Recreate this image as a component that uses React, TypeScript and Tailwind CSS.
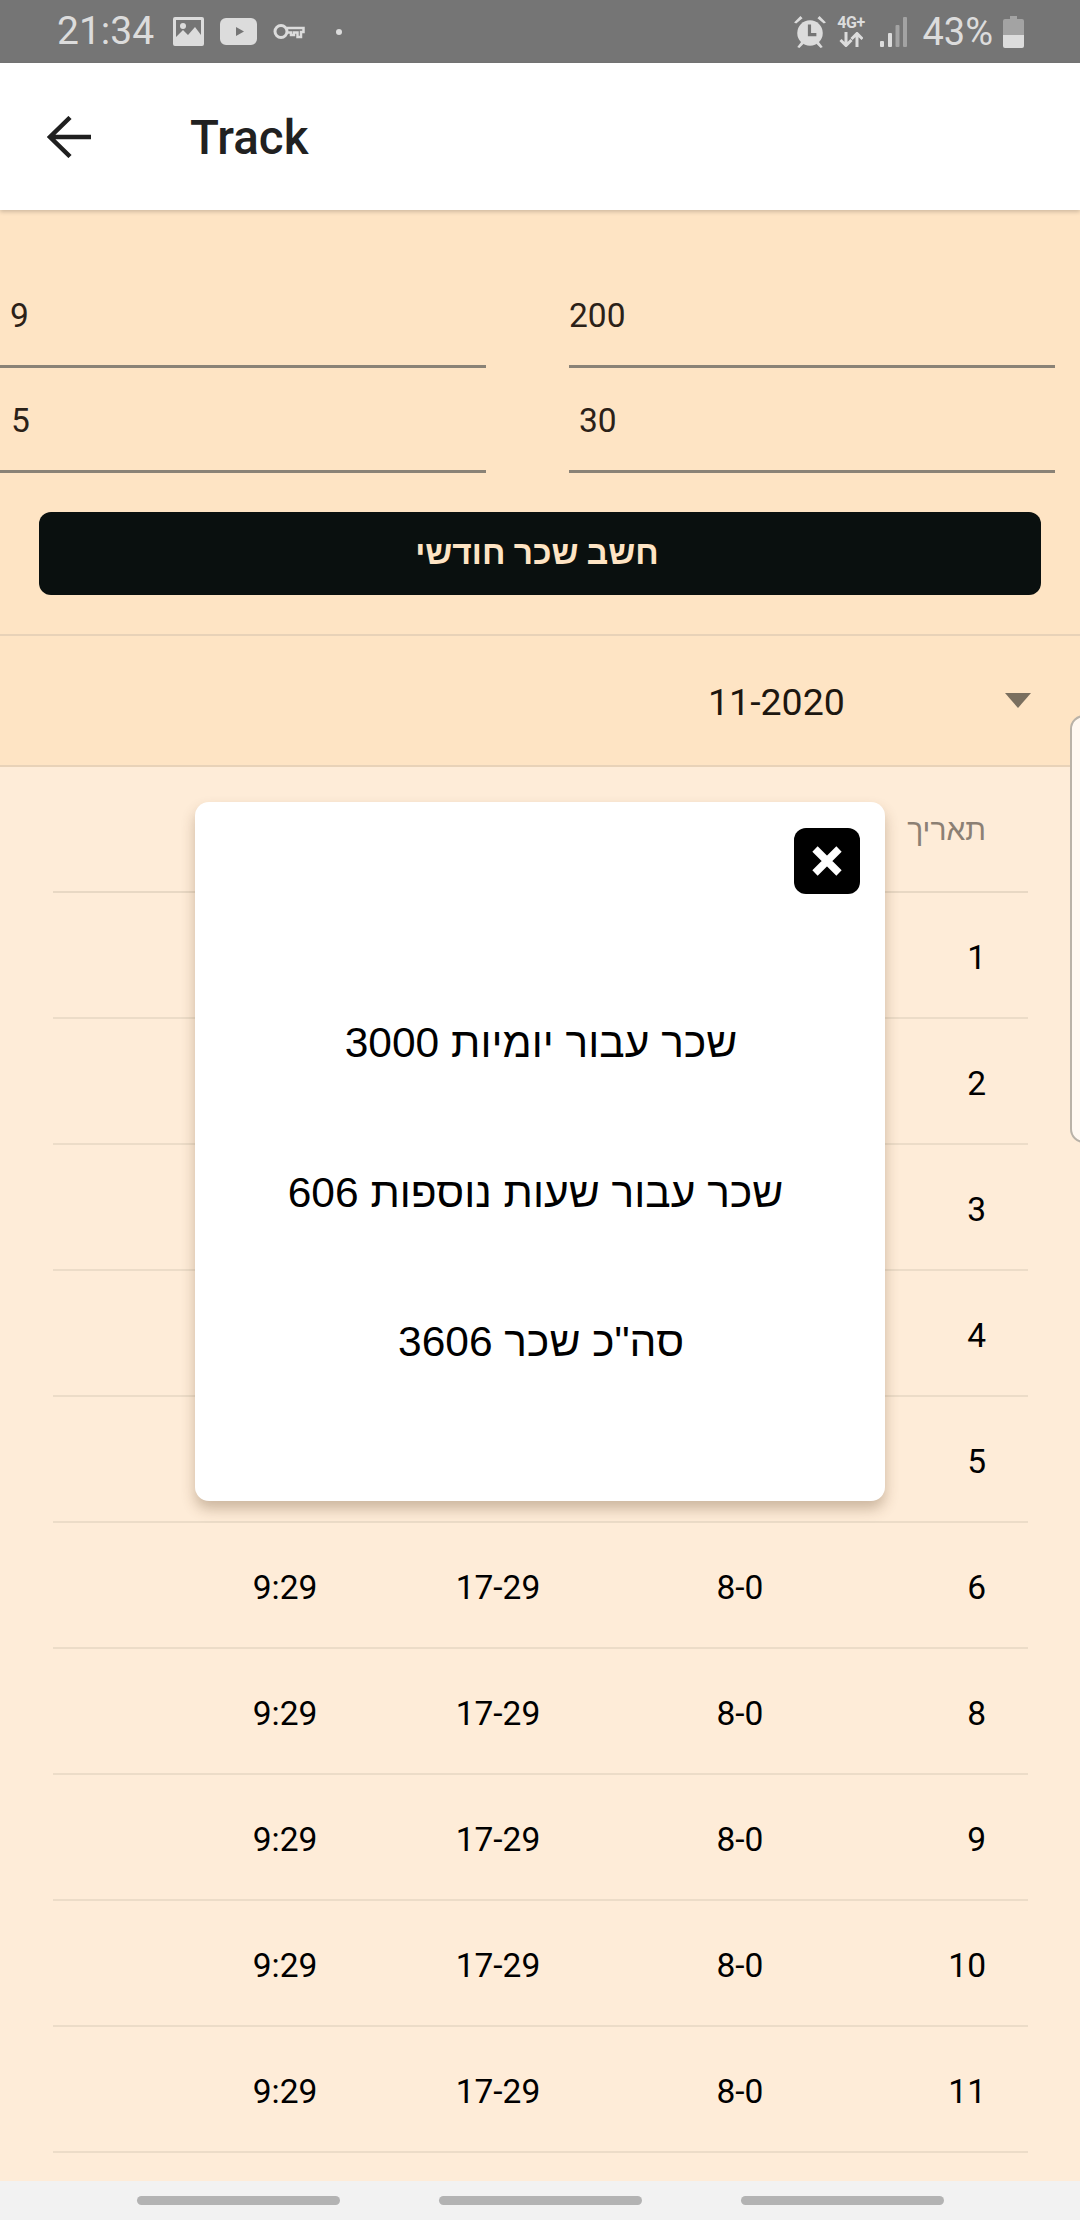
const rows = ["1", "2", "3", "4", "5", "6", "8", "9", "10", "11"];

// the dialog sits over the first five rows, only their date shows
const coveredRows = ["1", "2", "3", "4", "5"];

function StatusBar() {
  return (
    <div className="flex h-[63px] items-center justify-between bg-[#757575] pl-[57px] pr-[56px] text-[#dcdcdc]">
      <div className="flex items-center">
        <span className="text-[39px] leading-none">21:34</span>
        {/* picture */}
        <svg className="ml-[19px]" width="31" height="29" viewBox="0 0 31 29" fill="currentColor">
          <path fillRule="evenodd" d="M2 0h27a2 2 0 0 1 2 2v25a2 2 0 0 1-2 2H2a2 2 0 0 1-2-2V2a2 2 0 0 1 2-2zm1 3v17l7-7 5 5 7-8 6 8V3H3z" />
          <circle cx="10" cy="9" r="3" />
        </svg>
        {/* video */}
        <svg className="ml-4" width="37" height="27" viewBox="0 0 37 27" fill="currentColor">
          <path fillRule="evenodd" d="M6 0h25a6 6 0 0 1 6 6v15a6 6 0 0 1-6 6H6a6 6 0 0 1-6-6V6a6 6 0 0 1 6-6zm10 9v9l8-4.500z" />
        </svg>
        {/* key */}
        <svg className="ml-4" width="32" height="17" viewBox="0 0 32 17" fill="none" stroke="currentColor" strokeWidth="3">
          <circle cx="8" cy="8.500" r="6" />
          <path d="M14 5h16.500v4H28v5h-3.500V9.500H21V12h-3V9.500h-4" strokeWidth="2.500" />
        </svg>
        <span className="ml-[31px] h-[6px] w-[6px] rounded-full bg-[#dcdcdc]" />
      </div>
      <div className="flex items-center">
        {/* alarm */}
        <svg width="34" height="34" viewBox="0 0 32 32" fill="currentColor">
          <circle cx="16" cy="17" r="12" />
          <path d="M1 7l6-6 2 2-6 5zM31 7l-6-6-2 2 6 5zM4 30l4-5 2 2-4 4zM28 30l-4-5-2 2 4 4z" />
          <path d="M14 9h3v8h5v3h-8z" fill="#757575" />
        </svg>
        <div className="ml-[8px] flex w-[31px] flex-col items-center">
          <span className="text-[16px] font-bold leading-[13px] tracking-[-0.5px]">4G+</span>
          <svg className="mt-[3px]" width="24" height="15" viewBox="0 0 24 15" fill="none" stroke="currentColor" strokeWidth="3">
            <path d="M7 0v13M1.500 8l5.500 5.500L12.500 8" />
            <path d="M18 15V2M12.500 7L18 1.500 23.500 7" />
          </svg>
        </div>
        {/* signal */}
        <svg className="ml-[14px]" width="27" height="30" viewBox="0 0 27 30" fill="currentColor">
          <rect x="0" y="24" width="4" height="6" rx="1" />
          <rect x="8" y="16" width="4" height="14" rx="1" />
          <rect x="15.500" y="8" width="4" height="22" rx="1" opacity="0.45" />
          <rect x="23" y="0" width="4" height="30" rx="1" opacity="0.45" />
        </svg>
        <span className="ml-[15px] text-[38px] leading-none">43%</span>
        <svg className="ml-[10px]" width="21" height="32" viewBox="0 0 21 32" fill="currentColor">
          <path d="M7 0h7v3h5a2 2 0 0 1 2 2v14H0V5a2 2 0 0 1 2-2h5z" opacity="0.45" />
          <path d="M0 19h21v11a2 2 0 0 1-2 2H2a2 2 0 0 1-2-2z" />
        </svg>
      </div>
    </div>
  );
}

function Field({ value, indent }: { value: string; indent: string }) {
  return (
    <div className={`flex h-[105px] w-[486px] items-center border-b-[3px] border-[#8a8276] pt-[4px] text-[33.500px] text-[#2b2118] ${indent}`}>
      {value}
    </div>
  );
}

export default function App() {
  return (
    <div className="relative h-[2220px] w-[1080px] overflow-hidden bg-[#feecd8] font-['Roboto','Liberation_Sans',sans-serif]">
      <StatusBar />

      {/* toolbar */}
      <div className="relative z-10 flex h-[147px] items-center bg-white shadow-[0_2px_4px_rgba(0,0,0,0.18)]">
        <svg className="ml-[47px]" width="44" height="42" viewBox="0 0 44 42" fill="none" stroke="#1f1f1f" strokeWidth="4.500">
          <path d="M44 21H3M23 1.500L3 21l20 19.500" />
        </svg>
        <span className="ml-[99px] pt-[5px] text-[47.500px] font-medium text-[#212121]">Track</span>
      </div>

      {/* inputs */}
      <div className="bg-[#fee4c4]">
        <div className="flex flex-col pt-[53px]">
          <div className="flex justify-between pr-[25px]">
            <Field value="9" indent="pl-[10px]" />
            <Field value="200" indent="" />
          </div>
          <div className="flex justify-between pr-[25px]">
            <Field value="5" indent="pl-[11px]" />
            <Field value="30" indent="pl-[10px]" />
          </div>
        </div>
        <div className="p-[39px]">
          <button className="flex h-[83px] w-[1002px] items-center justify-center rounded-[12px] bg-[#0a100f] pr-[6px] text-[33.500px] font-bold text-[#fee4c4]" dir="rtl">
            חשב שכר חודשי
          </button>
        </div>
        <div className="flex h-[133px] items-center border-y-2 border-[#e8d2b8]">
          <span className="ml-[708px] pt-[4px] text-[37.500px] text-[#1d1710]">11-2020</span>
          <span className="ml-[160px] h-0 w-0 border-x-[13px] border-t-[15px] border-x-transparent border-t-[#7a6f5f]" />
        </div>
      </div>

      {/* table */}
      <div className="ml-[53px] mr-[52px]">
        <div className="flex h-[126px] items-center justify-end border-b-2 border-[#e8d8c4] pr-[42px] text-[30px] text-[#8c8074]">
          <span dir="rtl">תאריך</span>
        </div>
        {rows.map((n) => (
          <div key={n} className="flex h-[126px] items-center border-b-2 border-[#ecdcc8] pt-[6px] text-[33.500px] text-black">
            {!coveredRows.includes(n) && (
              <>
                <span className="ml-[172px] w-[120px] text-center">9:29</span>
                <span className="ml-[93px] w-[120px] text-center">17-29</span>
                <span className="ml-[122px] w-[120px] text-center">8-0</span>
              </>
            )}
            <span className="ml-auto mr-[42px]">{n}</span>
          </div>
        ))}
      </div>

      {/* nav bar */}
      <div className="absolute bottom-0 left-0 flex h-[39px] w-full items-start justify-center gap-[99px] bg-[#f2f2f2] pt-[15px]">
        <span className="h-[9px] w-[203px] rounded-full bg-[#b3b3b3]" />
        <span className="h-[9px] w-[203px] rounded-full bg-[#b3b3b3]" />
        <span className="h-[9px] w-[203px] rounded-full bg-[#b3b3b3]" />
      </div>

      {/* edge panel handle */}
      <div className="absolute left-[1070px] top-[715px] h-[428px] w-[20px] rounded-l-[14px] border-2 border-[#b9b2a8] bg-[#fff8f1]" />

      {/* dialog */}
      <div className="absolute left-[195px] top-[802px] h-[699px] w-[690px] rounded-[14px] bg-white shadow-[0_8px_14px_rgba(90,60,30,0.3)]">
        <div className="flex justify-end pr-[25px] pt-[26px]">
          <button className="flex h-[66px] w-[66px] items-center justify-center rounded-[12px] bg-black">
            <svg width="30" height="30" viewBox="0 0 30 30" fill="none" stroke="white" strokeWidth="7.500">
              <path d="M3 3l24 24M27 3L3 27" />
            </svg>
          </button>
        </div>
        <div className="mt-[124px] flex flex-col items-center gap-[99.500px] pl-[2px] font-['Liberation_Sans'] text-[42.500px] leading-[50px] text-black" dir="rtl">
          <p>שכר עבור יומיות 3000</p>
          <p className="pr-[11px]">שכר עבור שעות נוספות 606</p>
          <p>סה"כ שכר 3606</p>
        </div>
      </div>
    </div>
  );
}
